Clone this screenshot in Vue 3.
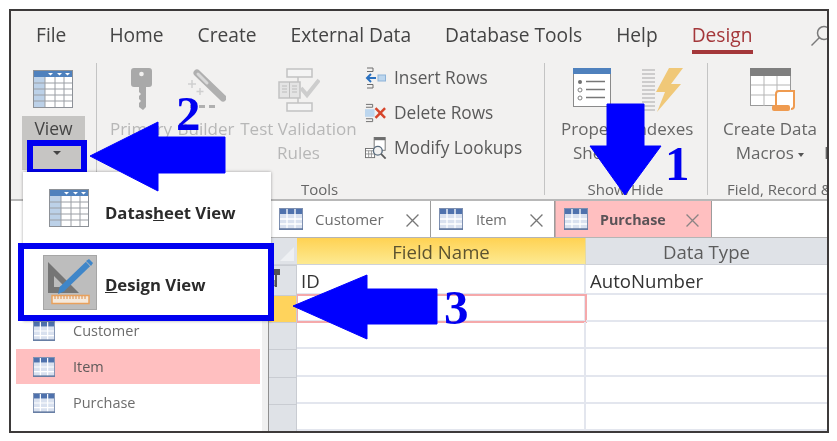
<script setup>
const menuTabs = ['File', 'Home', 'Create', 'External Data', 'Database Tools', 'Help']

const rowTools = [
  { icon: '#ic-insert', label: 'Insert Rows' },
  { icon: '#ic-delete', label: 'Delete Rows' },
  { icon: '#ic-lookup', label: 'Modify Lookups' }
]

const navItems = [
  { name: 'Customer', on: false },
  { name: 'Item', on: true },
  { name: 'Purchase', on: false }
]

const docTabs = [
  { name: 'Customer', cls: 'tab-customer' },
  { name: 'Item', cls: 'tab-item' },
  { name: 'Purchase', cls: 'tab-purchase' }
]

const rows = [
  { id: 1, field: 'ID', type: 'AutoNumber', key: true },
  { id: 2, field: '', type: '', active: true },
  { id: 3, field: '', type: '' },
  { id: 4, field: '', type: '' },
  { id: 5, field: '', type: '' },
  { id: 6, field: '', type: '' }
]
</script>

<template>
  <div class="shot">
    <!-- shared icons -->
    <svg class="defs" aria-hidden="true">
      <symbol id="ic-sheet" viewBox="0 0 40 38">
        <rect x="0.5" y="0.5" width="39" height="37" fill="#fff" stroke="#8d9197" />
        <rect x="1" y="1" width="38" height="6" fill="#4f81bd" />
        <rect x="1" y="7" width="11" height="30" fill="#bcd1e8" />
        <path d="M15 3h5l-2.500 2.500zM24 3h5l-2.500 2.500zM32 3h5l-2.500 2.500z" fill="#fff" />
        <path d="M1 13h38M1 19h38M1 25h38M1 31h38M12 7v30M22 7v30M31 7v30" stroke="#9a9ea4" stroke-width="1" fill="none" />
      </symbol>
      <symbol id="ic-table" viewBox="0 0 24 22">
        <rect x="0.500" y="0.500" width="23" height="21" fill="#d9e1ef" stroke="#7d8fb0" />
        <rect x="1" y="1" width="22" height="5" fill="#4f72ad" />
        <path d="M1 11h22M1 16h22M8 1v20M16 1v20" stroke="#fff" stroke-width="1.300" fill="none" />
        <path d="M0 21h24" stroke="#5f769f" stroke-width="1.500" />
      </symbol>
      <symbol id="ic-insert" viewBox="0 0 22 22">
        <path d="M2 1h6v3.500H2M2 17.500h6V21H2" fill="none" stroke="#6d6d6d" />
        <path d="M11 11H2M6 7l-4 4 4 4" fill="none" stroke="#2b71c0" stroke-width="2" />
        <rect x="13" y="8" width="7.500" height="6" fill="#bcd6ee" stroke="#8db3d8" />
      </symbol>
      <symbol id="ic-delete" viewBox="0 0 23 20">
        <path d="M1 1h7v3H1M1 16h7v3H1" fill="none" stroke="#6d6d6d" />
        <rect x="0" y="6" width="10" height="8" fill="#bcd6ee" />
        <path d="M11 5l10 10M21 5L11 15" stroke="#d6452b" stroke-width="2.600" />
      </symbol>
      <symbol id="ic-lookup" viewBox="0 0 24 24">
        <rect x="10" y="0.500" width="12" height="14" fill="#fff" stroke="#6d6d6d" />
        <rect x="10" y="0.500" width="12" height="3" fill="#6d6d6d" />
        <rect x="0.500" y="12.500" width="10" height="10" fill="#fff" stroke="#6d6d6d" />
        <path d="M1 15h9M1 18.500h9M4 15v7M7 15v7" stroke="#7a7a7a" stroke-width="0.800" />
        <circle cx="14" cy="15" r="4.800" fill="#f2f1f0" stroke="#5a6d7f" stroke-width="1.500" />
        <path d="M17.500 18.500l5 5" stroke="#5a5a5a" stroke-width="2" />
      </symbol>
    </svg>

    <div class="frame">
      <header class="ribbon">
        <nav class="menu">
          <span v-for="t in menuTabs" :key="t" class="menu-tab" :class="{ 'menu-file': t === 'File' }">{{ t }}</span>
          <span class="menu-tab menu-active">Design</span>
          <svg class="search" viewBox="0 0 22 22" width="22" height="22">
            <circle cx="14" cy="8" r="6.500" fill="none" stroke="#7a7a7a" stroke-width="1.500" />
            <path d="M9.500 12.500L1.500 20.500" stroke="#7a7a7a" stroke-width="1.500" />
          </svg>
        </nav>

        <div class="groups">
          <!-- Views -->
          <section class="group group-view">
            <svg class="view-icon" width="40" height="38"><use href="#ic-sheet" /></svg>
            <div class="view-btn">
              <span class="view-label">View</span>
              <div class="view-drop"><i class="caret"></i></div>
            </div>
          </section>
          <i class="sep"></i>

          <!-- Tools -->
          <section class="group group-tools">
            <div class="tools-row">
              <div class="btn off btn-key">
                <div class="btn-icon">
                  <svg width="21" height="42" viewBox="0 0 21 42">
                    <path d="M3 0h15q3 0 3 3v13q0 3-3 3h-3v20l-3 3-4-3v-4l2-2-2-2v-3l2-2-2-2v-5H3q-3 0-3-3V3q0-3 3-3z" fill="#a9a9a9" />
                    <circle cx="10.500" cy="6" r="2.300" fill="#f2f1f0" />
                  </svg>
                </div>
                <span>Primary</span><span>Key</span>
              </div>
              <div class="btn off btn-builder">
                <div class="btn-icon">
                  <svg width="40" height="42" viewBox="0 0 40 42">
                    <path d="M11 5l26 25" stroke="#b0b0b0" stroke-width="7" stroke-linecap="round" />
                    <path d="M12 6l9 9" stroke="#d9d9d9" stroke-width="3" stroke-linecap="round" />
                    <path d="M6 12v8M2 16h8M14 20v7M10.500 23.500h7" stroke="#cfcfcf" stroke-width="1.500" />
                    <path d="M4 37h5v3H4zM13 37h6v3h-6zM23 37h6v3h-6z" fill="#b0b0b0" />
                  </svg>
                </div>
                <span>Builder</span>
              </div>
              <div class="btn off btn-test">
                <div class="btn-icon">
                  <svg width="42" height="44" viewBox="0 0 42 44">
                    <rect x="9" y="1" width="25" height="8" fill="#f4f4f4" stroke="#c2c2c2" stroke-width="1.500" />
                    <rect x="9" y="35" width="25" height="8" fill="#f4f4f4" stroke="#c2c2c2" stroke-width="1.500" />
                    <path d="M20 9v5M20 30v5" stroke="#c2c2c2" stroke-width="1.500" />
                    <rect x="1" y="14" width="21" height="16" fill="#e4e4e4" stroke="#c2c2c2" stroke-width="1.500" />
                    <path d="M11.500 14v16M4 18h5M4 21h5M4 24h5M14 18h5M14 21h5M14 24h5" stroke="#bcbcbc" />
                    <path d="M23 20l6 7 12-15" fill="none" stroke="#cdcdcd" stroke-width="4" />
                  </svg>
                </div>
                <span>Test Validation</span><span>Rules</span>
              </div>
              <ul class="row-tools">
                <li v-for="r in rowTools" :key="r.label">
                  <svg width="22" height="22"><use :href="r.icon" /></svg>
                  <span>{{ r.label }}</span>
                </li>
              </ul>
            </div>
            <div class="group-label label-tools">Tools</div>
          </section>
          <i class="sep"></i>

          <!-- Show/Hide -->
          <section class="group group-show">
            <div class="tools-row">
              <div class="btn btn-prop">
                <div class="btn-icon icon-prop">
                  <svg width="38" height="40" viewBox="0 0 38 40">
                    <rect x="0.500" y="0.500" width="37" height="38" fill="#fff" stroke="#8a8a8a" />
                    <rect x="0" y="0" width="38" height="6" fill="#4f81bd" />
                    <circle cx="7" cy="14" r="2" fill="#707070" />
                    <circle cx="7" cy="22" r="2" fill="none" stroke="#808080" />
                    <circle cx="7" cy="30" r="2" fill="none" stroke="#808080" />
                    <path d="M13 13.500h19M13 21.500h19M13 29.500h19" stroke="#777" stroke-width="1.300" />
                  </svg>
                </div>
                <span>Property</span><span>Sheet</span>
              </div>
              <div class="btn btn-index">
                <div class="btn-icon">
                  <svg width="42" height="45" viewBox="0 0 42 45">
                    <path d="M0 2h13M0 6h13M0 10h13M0 14h13M0 18h13M0 22h13M0 26h13M0 30h13M0 34h13M0 38h13M0 42h13" stroke="#a8a8a8" stroke-width="1.200" />
                    <path d="M27 0h14L29 16h10L15 44l8-20H14z" fill="#f0c878" />
                  </svg>
                </div>
                <span>Indexes</span>
              </div>
            </div>
            <div class="group-label label-show">Show/Hide</div>
          </section>
          <i class="sep"></i>

          <!-- Field, Record & Table Events -->
          <section class="group group-field">
            <div class="tools-row">
              <div class="btn btn-macro">
                <div class="btn-icon icon-macro">
                  <svg width="46" height="44" viewBox="0 0 46 44">
                    <rect x="0.500" y="0.500" width="40" height="37" fill="#fff" stroke="#9a9a9a" />
                    <rect x="0" y="0" width="41" height="8" fill="#7f7f7f" />
                    <path d="M1 17h39M1 27h39M14 8v30M27 8v30" stroke="#b5b5b5" />
                    <path d="M26 38V26q0-3 3-3h15v15q0 3-3 3" fill="#fff" stroke="#ef9b50" stroke-width="2" />
                    <rect x="22" y="37" width="18" height="6" rx="2" fill="#ef9b50" />
                  </svg>
                </div>
                <span>Create Data</span><span>Macros <i class="mini-caret"></i></span>
              </div>
              <div class="btn btn-more"><div class="btn-icon"></div><span>&nbsp;</span><span>Delete</span></div>
            </div>
            <div class="group-label group-label-left">Field, Record &amp; Table Events</div>
          </section>
        </div>
      </header>

      <div class="body">
        <aside class="pane">
          <div class="pane-list">
            <div v-for="n in navItems" :key="n.name" class="pane-row" :class="{ on: n.on }">
              <svg width="24" height="20"><use href="#ic-table" /></svg>
              <span>{{ n.name }}</span>
            </div>
          </div>
          <div class="pane-scroll"></div>
        </aside>

        <main class="doc">
          <div class="tabs">
            <div v-for="t in docTabs" :key="t.name" class="tab" :class="t.cls">
              <svg width="24" height="22"><use href="#ic-table" /></svg>
              <span class="tab-name">{{ t.name }}</span>
              <svg class="tab-x" width="13" height="13" viewBox="0 0 12 12">
                <path d="M0.500 0.500l11 11M11.500 0.500l-11 11" stroke="#777" stroke-width="1.200" />
              </svg>
            </div>
          </div>

          <div class="grid">
            <div class="corner"><i></i></div>
            <div class="head head-on">Field Name</div>
            <div class="head">Data Type</div>
            <template v-for="r in rows" :key="r.id">
              <div class="sel" :class="{ 'sel-on': r.active }">
                <svg v-if="r.key" class="sel-key" width="8" height="18" viewBox="0 0 8 18">
                  <path d="M0 0h8v6H5v12H3l-1-2 1-1-1-1 1-1-1-1 1-1V6H0z" fill="#555" />
                </svg>
              </div>
              <div class="cell cell-name" :class="{ 'cell-on': r.active }">{{ r.field }}</div>
              <div class="cell">{{ r.type }}</div>
            </template>
          </div>
        </main>
      </div>
    </div>

    <!-- View dropdown -->
    <div class="popup">
      <div class="pop-item pop-sheet">
        <svg width="40" height="38"><use href="#ic-sheet" /></svg>
        <span>Datas<u>h</u>eet View</span>
      </div>
      <div class="pop-item pop-design">
        <svg width="54" height="55" viewBox="0 0 54 55">
          <rect x="0.500" y="0.500" width="53" height="54" fill="#bdbdbd" stroke="#a6a6a6" />
          <path fill-rule="evenodd" d="M5 7l31 31H5zM11 21v11h11z" fill="#757575" />
          <path d="M45 9L19 34" stroke="#3f86c9" stroke-width="6" />
          <path d="M17 31l5 5-7 3z" fill="#3f86c9" />
          <path d="M43 6l3-2 4 4-2 3z" fill="#3f86c9" />
          <rect x="9" y="40.500" width="37" height="8" fill="#f5e9dc" stroke="#e9a15c" stroke-width="1.500" />
          <path d="M12 41v3M15 41v3M18 41v3M21 41v3M24 41v3M27 41v3M30 41v3M33 41v3M36 41v3M39 41v3M42 41v3" stroke="#d98c48" />
        </svg>
        <span><u>D</u>esign View</span>
      </div>
    </div>

    <!-- step arrows -->
    <svg class="arrow arrow-1" width="74" height="94" viewBox="0 0 74 94">
      <path d="M18 1h37v42h17L36 92 1 43h17z" />
    </svg>
    <svg class="arrow arrow-2" width="137" height="71" viewBox="0 0 137 71">
      <path d="M1 35L69 1v15h67v36H69v18z" />
    </svg>
    <svg class="arrow arrow-3" width="146" height="66" viewBox="0 0 146 66">
      <path d="M1 32L75 1v14h70v35H75v15z" />
    </svg>
    <span class="step step-1">1</span>
    <span class="step step-2">2</span>
    <span class="step step-3">3</span>
  </div>
</template>

<style>
html, body { margin: 0; background: #fff; overflow: hidden; }
</style>

<style scoped>
.shot {
  position: relative;
  width: 837px;
  height: 441px;
  box-sizing: border-box;
  padding: 9px 8px 8px 9px;
  background: #fff;
  font-family: "Open Sans", "Noto Sans", sans-serif;
  overflow: hidden;
  filter: blur(0.6px);
}
.defs { position: absolute; width: 0; height: 0; }

.frame {
  width: 820px;
  height: 424px;
  box-sizing: border-box;
  border: 2px solid #3d3a3a;
  background: #fff;
  overflow: hidden;
}

/* ribbon */
.ribbon {
  height: 190px;
  box-sizing: border-box;
  background: #f2f1f0;
  border-bottom: 2px solid #b8b8b8;
}
.menu {
  position: relative;
  height: 52px;
  display: flex;
  align-items: flex-start;
  gap: 34px;
  padding: 9px 0 0 25px;
  box-sizing: border-box;
  font-size: 19.2px;
  line-height: 30px;
  color: #444;
  white-space: nowrap;
}
.menu-file { margin-right: 9px; }
.menu-active {
  color: #a4373a;
  font-weight: 500;
  border-bottom: 4px solid #a4373a;
}
.search { position: absolute; left: 799px; top: 14px; }

.groups { display: flex; height: 137px; }
.sep { width: 1px; height: 132px; background: #c4c4c4; flex: none; }
.group {
  flex: none;
  display: flex;
  flex-direction: column;
  overflow: hidden;
  color: #666;
  font-size: 17px;
  line-height: 24px;
  white-space: nowrap;
}
.group-view { width: 85px; padding-left: 11px; box-sizing: border-box; }
.group-tools { width: 447px; padding-left: 14px; box-sizing: border-box; }
.group-show { width: 162px; padding-left: 13px; box-sizing: border-box; }
.group-field { width: 119px; padding-left: 15px; box-sizing: border-box; }

.view-icon { margin: 7px 0 8px 11px; flex: none; }
.view-btn {
  width: 63px;
  height: 54px;
  background: #c6c5c3;
  color: #444;
  text-align: center;
}
.view-label { display: block; height: 24px; font-size: 17.5px; }
.view-drop {
  width: 60px;
  height: 35px;
  box-sizing: border-box;
  margin-left: 5px;
  border: 6px solid #0000f0;
  background: #c6c5c3;
  display: flex;
  justify-content: center;
  padding-top: 5px;
}
.caret {
  width: 0;
  height: 0;
  border: 4px solid transparent;
  border-top: 4px solid #444;
}

.tools-row { display: flex; height: 115px; flex: none; }
.btn { display: flex; flex-direction: column; align-items: center; flex: none; }
.btn-icon { height: 54px; padding-top: 5px; box-sizing: border-box; flex: none; }
.off { color: #b7b7b7; }
.btn-key { width: 60px; margin-right: 7px; }
.btn-builder { width: 56px; margin-right: 6px; }
.btn-test { width: 117px; margin-right: 8px; }
.row-tools {
  list-style: none;
  margin: -3px 0 0;
  padding: 0;
  color: #5a5a5a;
}
.row-tools li {
  display: flex;
  align-items: center;
  gap: 7px;
  height: 35px;
  font-size: 17.3px;
}
.btn-prop { width: 75px; }
.icon-prop { margin-left: -7px; }
.btn-index { width: 59px; }
.btn-macro { width: 94px; margin-right: 7px; }
.icon-macro { margin-left: 6px; }
.btn-more { align-items: flex-start; }
.mini-caret {
  display: inline-block;
  width: 0;
  height: 0;
  border: 3.500px solid transparent;
  border-top: 4px solid #555;
  vertical-align: -1px;
}
.group-label {
  height: 20px;
  text-align: center;
  font-size: 15px;
  line-height: 22px;
  color: #666;
}
.label-tools { margin-right: 16px; }
.label-show { margin-right: 14px; }
.group-label-left { text-align: left; margin-left: 4px; }

/* body */
.body { display: flex; height: 230px; }
.pane {
  width: 258px;
  flex: none;
  display: flex;
  box-sizing: border-box;
  border-right: 1px solid #8f8f8f;
}
.pane-list { flex: 1; padding: 112px 2px 0 5px; }
.pane-scroll { width: 6px; background: #f0f0f0; }
.pane-row {
  display: flex;
  align-items: center;
  height: 35px;
  margin-bottom: 1px;
  padding-left: 16px;
  gap: 17px;
  font-size: 14.5px;
  color: #6d6d6d;
}
.pane-row.on { background: #ffbfc0; color: #5f5a5a; }

.doc { flex: 1; display: flex; flex-direction: column; min-width: 0; }
.tabs {
  display: flex;
  height: 37px;
  flex: none;
  padding-left: 2px;
  box-sizing: border-box;
  border-bottom: 1px solid #b5b5b5;
}
.tab {
  display: flex;
  align-items: center;
  padding-left: 8px;
  box-sizing: border-box;
  border-right: 1px solid #9c9c9c;
  font-size: 15px;
  color: #6d6d6d;
  position: relative;
}
.tab-name { margin-left: 12px; }
.tab-x { position: absolute; top: 13px; }
.tab-customer { width: 160px; }
.tab-customer .tab-x { left: 135px; }
.tab-item { width: 124px; }
.tab-item .tab-name { margin-left: 13px; font-size: 14.5px; }
.tab-item .tab-x { left: 99px; }
.tab-purchase {
  width: 157px;
  background: #ffbfc0;
  font-weight: 700;
  font-size: 14.3px;
  color: #5a5357;
  border-left: 1px solid #c9a6a6;
}
.tab-purchase .tab-x { left: 130px; }
.tab-purchase .tab-name { margin-left: 12px; }
.tab-purchase .tab-x path { stroke: #8b8484; }

.grid {
  flex: 1;
  display: grid;
  grid-template-columns: 28px 289px 1fr;
  grid-template-rows: 27px repeat(6, 1fr);
  font-size: 18.6px;
  color: #333;
  min-height: 0;
}
.corner {
  background: #dfe2e7;
  position: relative;
  border-bottom: 1px solid #cfd2d8;
}
.corner i {
  position: absolute;
  right: 3px;
  bottom: 3px;
  width: 0;
  height: 0;
  border-left: 14px solid transparent;
  border-bottom: 14px solid #eef0f3;
}
.head {
  background: #dfe2e7;
  display: flex;
  align-items: center;
  justify-content: center;
  color: #5c5c5c;
  border-bottom: 1px solid #cfd2d8;
}
.head-on { background: linear-gradient(#ffd253, #fdea92); color: #5c5330; border-right: 1px solid #e4d9a4; }
.sel {
  background: #dfe2e7;
  border-top: 1px solid #c9ccd2;
  border-right: 1px solid #c9ccd2;
  position: relative;
  box-sizing: border-box;
}
.sel-on { background: #ffd35c; }
.sel-key { position: absolute; left: 3px; top: 3px; }
.cell {
  display: flex;
  align-items: center;
  padding: 3px 0 0 4px;
  box-sizing: border-box;
  border-bottom: 2px solid #e3e6ee;
}
.cell-name { border-right: 2px solid #e3e6ee; }
.cell-on { outline: 2px solid #f5a9ab; outline-offset: -1px; }

/* dropdown menu */
.popup {
  position: absolute;
  left: 23px;
  top: 172px;
  width: 248px;
  background: #fff;
  box-shadow: 0 0 3px rgba(0, 0, 0, 0.35);
  font-size: 16.7px;
  font-weight: 700;
  color: #2b2b2b;
}
.pop-item { display: flex; align-items: center; box-sizing: border-box; }
.pop-sheet { height: 71px; padding-left: 26px; gap: 16px; }
.pop-sheet span { padding-top: 10px; }
.pop-design {
  height: 78px;
  margin: 0 -3px 0 -5px;
  padding-left: 19px;
  gap: 8px;
  border: 6px solid #0000f0;
  background: #fff;
}
.pop-design span { padding-top: 4px; }

/* annotations */
.arrow { position: absolute; fill: #0000ff; stroke: #0000ff; stroke-linejoin: round; }
.arrow-1 { left: 589px; top: 103px; }
.arrow-2 { left: 89px; top: 121px; }
.arrow-3 { left: 292px; top: 274px; }
.step {
  position: absolute;
  font-family: "Liberation Serif", serif;
  font-weight: 700;
  font-size: 49px;
  line-height: 49px;
  color: #0000f0;
}
.step-1 { left: 665px; top: 139px; }
.step-2 { left: 176px; top: 89px; }
.step-3 { left: 444px; top: 283px; }
</style>
